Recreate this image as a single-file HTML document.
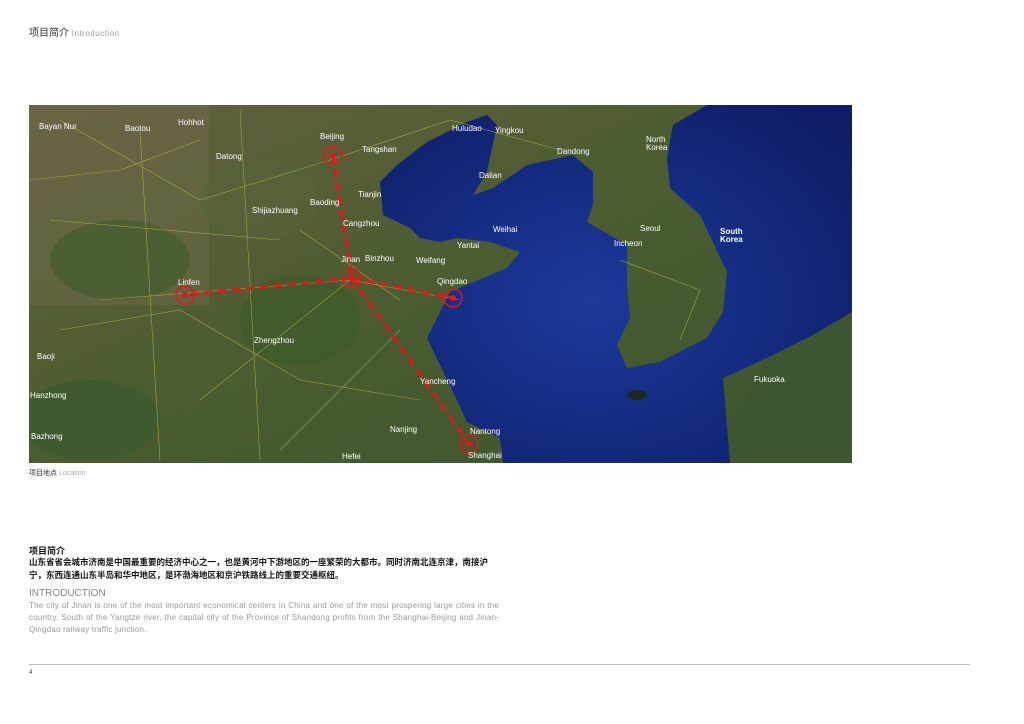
<!DOCTYPE html>
<html><head><meta charset="utf-8"><style>
body{margin:0;background:#fff;width:1024px;height:724px;position:relative;overflow:hidden;font-family:"Liberation Sans","Noto Sans CJK SC",sans-serif}
.a{position:absolute;white-space:nowrap}
</style></head><body>
<div class="a" style="left:29px;top:24px;font-size:10px;color:#333">项目简介 <span style="color:#999;font-size:8px;letter-spacing:.5px">Introduction</span></div>
<svg class="a" style="left:29px;top:105px" width="823" height="358" viewBox="29 105 823 358">
<defs><linearGradient id="g" x1="0" y1="0" x2="1" y2="1"><stop offset="0" stop-color="#65603f"/><stop offset=".5" stop-color="#4a5c30"/><stop offset="1" stop-color="#3b5530"/></linearGradient>
<radialGradient id="s" cx=".45" cy=".55" r=".7"><stop offset="0" stop-color="#1c3a9c"/><stop offset="1" stop-color="#0e1d66"/></radialGradient></defs>
<rect x="29" y="105" width="823" height="358" fill="url(#g)"/>
<rect x="29" y="105" width="180" height="200" fill="#6e6a4a" opacity=".5"/>
<ellipse cx="120" cy="260" rx="70" ry="40" fill="#3e5a2c" opacity=".6"/>
<ellipse cx="300" cy="320" rx="60" ry="45" fill="#3a5a2a" opacity=".6"/>
<ellipse cx="90" cy="420" rx="70" ry="40" fill="#3a5a2e" opacity=".7"/>
<ellipse cx="260" cy="200" rx="60" ry="40" fill="#55643a" opacity=".6"/>
<polygon fill="url(#s)" points="380,182 397,165 427,142 467,122 487,115 497,125 487,172 473,195 493,188 527,165 573,155 593,172 593,205 587,222 627,245 627,288 630,318 617,345 627,368 660,362 687,348 707,338 723,312 727,272 700,215 670,188 667,158 673,125 707,105 852,105 852,312 813,335 767,358 723,378 730,463 503,463 500,438 467,422 453,392 440,365 427,338 440,312 450,292 507,268 520,252 490,242 457,238 440,242 420,238 410,228 383,215"/>
<polygon fill="#3d5530" points="767,358 813,335 852,312 852,463 760,463 745,420 750,390"/>
<ellipse cx="637" cy="395" rx="10" ry="5" fill="#1b2a1c"/>
<g fill="none" stroke="#c9c24a" stroke-width=".6" opacity=".7">
<path d="M60 120 L200 200 L330 160 M100 300 L350 280 L460 300 M200 400 L350 280 M50 220 L280 240 M240 110 L260 460 M140 130 L160 460 M400 330 L280 450 M330 160 L450 120 L560 150 M30 180 L120 170 L200 140 M60 330 L180 310 L300 380 L420 400 M620 260 L700 290 L680 340 M300 230 L400 300"/>
</g>
<g stroke="#e8141a" stroke-width="3" stroke-dasharray="9 5" fill="none">
<path d="M333 155 L352 278 M352 278 L453 298 M352 278 L185 295 M352 278 L469 444"/></g>
<g fill="none" stroke="#e8141a" stroke-width="1.5"><circle cx="333" cy="155" r="9"/><circle cx="352" cy="278" r="9"/><circle cx="453" cy="298" r="9"/><circle cx="185" cy="295" r="9"/><circle cx="469" cy="444" r="9"/></g>
<g fill="#e8141a"><circle cx="333" cy="155" r="3"/><circle cx="352" cy="278" r="3"/><circle cx="453" cy="298" r="3"/><circle cx="185" cy="295" r="3"/><circle cx="469" cy="444" r="3"/></g>
<g fill="#fff" font-size="8" font-family="Liberation Sans,Noto Sans CJK SC,sans-serif">
<text x="320" y="139">Beijing</text><text x="362" y="152">Tangshan</text><text x="358" y="197">Tianjin</text><text x="343" y="226">Cangzhou</text><text x="365" y="261">Binzhou</text><text x="341" y="262">Jinan</text><text x="416" y="263">Weifang</text><text x="437" y="284">Qingdao</text><text x="457" y="248">Yantai</text><text x="493" y="232">Weihai</text><text x="479" y="178">Dalian</text><text x="495" y="133">Yingkou</text><text x="452" y="131">Huludao</text><text x="557" y="154">Dandong</text><text x="646" y="142">North</text><text x="646" y="150">Korea</text><text x="720" y="234" font-weight="bold">South</text><text x="720" y="242" font-weight="bold">Korea</text><text x="614" y="246">Incheon</text><text x="640" y="231">Seoul</text><text x="470" y="434">Nantong</text><text x="468" y="458">Shanghai</text><text x="420" y="384">Yancheng</text><text x="390" y="432">Nanjing</text><text x="342" y="459">Hefei</text><text x="254" y="343">Zhengzhou</text><text x="178" y="285">Linfen</text><text x="216" y="159">Datong</text><text x="252" y="213">Shijiazhuang</text><text x="310" y="205">Baoding</text><text x="39" y="129">Bayan Nur</text><text x="125" y="131">Baotou</text><text x="178" y="125">Hohhot</text><text x="37" y="359">Baoji</text><text x="30" y="398">Hanzhong</text><text x="31" y="439">Bazhong</text><text x="754" y="382">Fukuoka</text></g>
</svg>
<div class="a" style="left:29px;top:468px;font-size:7px;color:#333">项目地点 <span style="color:#aaa">Location</span></div>
<div class="a" style="left:29px;top:544px;font-size:9px;color:#111;font-weight:bold">项目简介</div>
<div class="a" style="left:29px;top:556px;width:474px;font-size:8.5px;line-height:12.5px;color:#111;font-weight:bold;white-space:normal">山东省省会城市济南是中国最重要的经济中心之一，也是黄河中下游地区的一座繁荣的大都市。同时济南北连京津，南接沪宁，东西连通山东半岛和华中地区，是环渤海地区和京沪铁路线上的重要交通枢纽。</div>
<div class="a" style="left:29px;top:588px;font-size:10px;color:#888">INTRODUCTION</div>
<div class="a" style="left:29px;top:600px;width:470px;font-size:8px;line-height:12px;color:#999;white-space:normal;text-align:justify;letter-spacing:.2px">The city of Jinan is one of the most important economical centers in China and one of the most prospering large cities in the country. South of the Yangtze river, the capital city of the Province of Shandong profits from the Shanghai-Beijing and Jinan-Qingdao railway traffic junction.</div>
<div class="a" style="left:29px;top:664px;width:941px;height:1px;background:#bbb"></div>
<div class="a" style="left:29px;top:670px;font-size:6px;color:#333">4</div>
</body></html>
